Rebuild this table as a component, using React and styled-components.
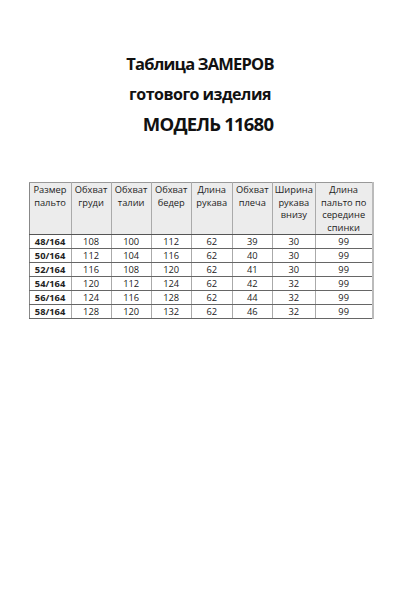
import React from "react";
import styled, { createGlobalStyle } from "styled-components";

const Global = createGlobalStyle`
  html, body { margin: 0; padding: 0; background: #fff; }
  body { font-family: "Open Sans", "Noto Sans", sans-serif; color: #111; }
`;

const Page = styled.div`
  width: 400px;
  height: 600px;
  display: flex;
  flex-direction: column;
  align-items: center;
  padding-top: 49px;
  box-sizing: border-box;
`;

const Titles = styled.div`
  display: flex;
  flex-direction: column;
  align-items: center;
  margin-bottom: 43px;
`;

const Title = styled.div`
  font-weight: 700;
  font-size: ${(p) => p.$size}px;
  line-height: ${(p) => p.$lh}px;
  letter-spacing: ${(p) => p.$ls || 0}px;
  padding-left: ${(p) => p.$shift || 0}px;
  white-space: pre;
  color: #111;
`;

const Table = styled.table`
  border-collapse: collapse;
  table-layout: fixed;
  width: 345px;
  margin-left: 2px;
  border-left: 1px solid #888;
  border-top: 1px solid #999;
  border-bottom: 1px solid #777;
  border-right: 2px solid #bbb;
  font-size: 9.3px;
`;

const HeadCell = styled.th`
  background: #ececec;
  font-weight: 400;
  height: 50px;
  vertical-align: top;
  text-align: center;
  padding: 1px 0 0;
  line-height: 12.5px;
  color: #222;
  border-right: 1px solid #aaa;
  border-bottom: 1px solid #555;
`;

const Cell = styled.td`
  height: 13px;
  padding: 0;
  text-align: center;
  line-height: 13px;
  font-weight: ${(p) => (p.$bold ? 700 : 400)};
  color: #222;
  border-right: 1px solid #aaa;
  border-bottom: 1px solid #666;
`;

const widths = [42, 40, 40, 40, 41, 40, 43, 57];
const headers = [
  ["Размер", "пальто"],
  ["Обхват", "груди"],
  ["Обхват", "талии"],
  ["Обхват", "бедер"],
  ["Длина", "рукава"],
  ["Обхват", "плеча"],
  ["Ширина", "рукава", "внизу"],
  ["Длина", "пальто по", "середине", "спинки"],
];
const rows = [
  ["48/164", "108", "100", "112", "62", "39", "30", "99"],
  ["50/164", "112", "104", "116", "62", "40", "30", "99"],
  ["52/164", "116", "108", "120", "62", "41", "30", "99"],
  ["54/164", "120", "112", "124", "62", "42", "32", " 99"],
  ["56/164", "124", "116", "128", "62", "44", "32", "99"],
  ["58/164", "128", "120", "132", "62", "46", "32", "99"],
];

export default function App() {
  return (
    <>
      <Global />
      <Page>
        <Titles>
          <Title $size={16.5} $lh={30} $ls={-0.8}>Таблица ЗАМЕРОВ</Title>
          <Title $size={16} $lh={30} $ls={-0.5}>готового изделия</Title>
          <Title $size={18.5} $lh={30} $ls={-0.8} $shift={16}>МОДЕЛЬ 11680</Title>
        </Titles>
        <Table>
          <colgroup>
            {widths.map((w, i) => (
              <col key={i} style={{ width: w }} />
            ))}
          </colgroup>
          <thead>
            <tr>
              {headers.map((h, i) => (
                <HeadCell key={i}>
                  {h.map((l, j) => (
                    <div key={j}>{l}</div>
                  ))}
                </HeadCell>
              ))}
            </tr>
          </thead>
          <tbody>
            {rows.map((r, i) => (
              <tr key={i}>
                {r.map((c, j) => (
                  <Cell key={j} $bold={j === 0}>
                    {c}
                  </Cell>
                ))}
              </tr>
            ))}
          </tbody>
        </Table>
      </Page>
    </>
  );
}
